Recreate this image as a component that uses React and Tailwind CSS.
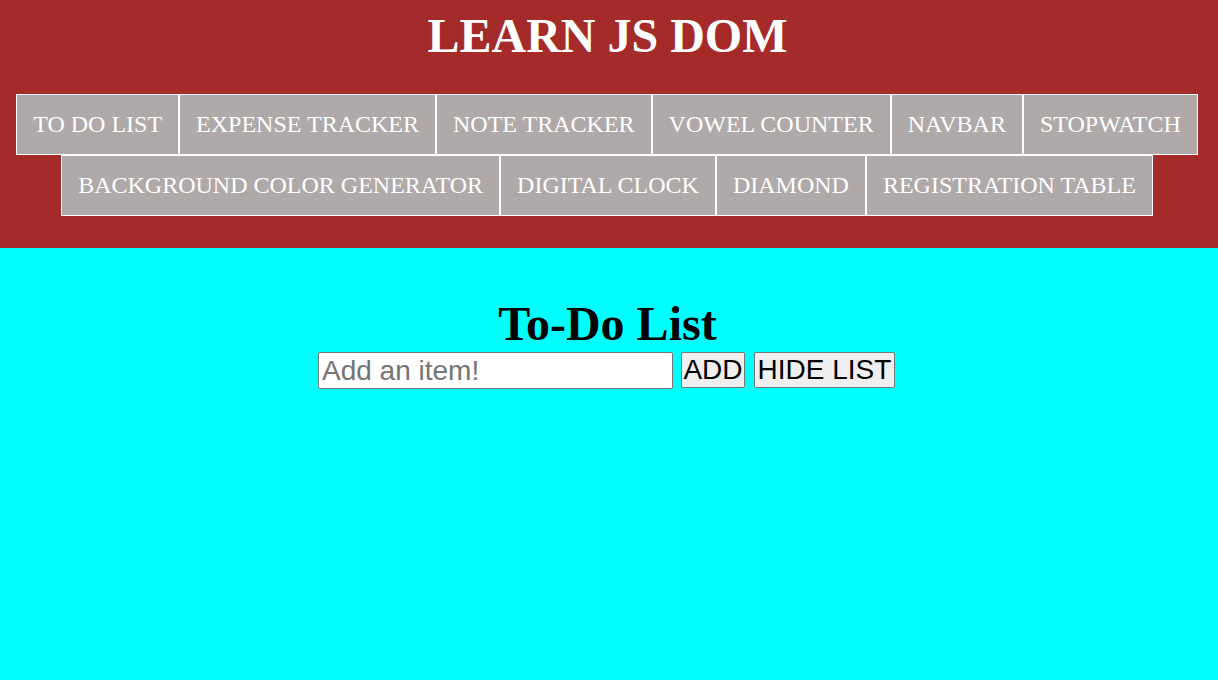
export default function App() {
  const row = [
    "TO DO LIST",
    "EXPENSE TRACKER",
    "NOTE TRACKER",
    "VOWEL COUNTER",
    "NAVBAR",
    "STOPWATCH",
    "BACKGROUND COLOR GENERATOR",
    "DIGITAL CLOCK",
    "DIAMOND",
    "REGISTRATION TABLE",
  ];
  return (
    <div className="min-h-[680px] flex flex-col" style={{ fontFamily: '"Liberation Serif", "Times New Roman", serif' }}>
      <header className="bg-[#a52a2a] pt-[9px] pb-[32px] pr-[3px]">
        <h1 className="text-center text-white font-bold text-[48px] leading-[53px] mb-[32px] m-0">
          LEARN JS DOM
        </h1>
        <nav className="flex flex-wrap justify-center pr-[1px]">
          {row.map((t) => (
            <div
              key={t}
              className="bg-[#afa9a9] border border-white text-white text-[24px] leading-[27px] px-4 py-4 whitespace-nowrap"
            >
              {t}
            </div>
          ))}
        </nav>
      </header>
      <main className="flex-1 bg-[#00ffff] pt-[49px] pr-[3px]">
        <h1 className="text-center text-black font-bold text-[48px] leading-[53px] m-0">
          To-Do List
        </h1>
        <div
          className="flex justify-center items-start mt-[2px] pr-[2px]"
          style={{ fontFamily: '"Liberation Sans", Arial, sans-serif' }}
        >
          <input
            type="text"
            placeholder="Add an item!"
            className="w-[355px] h-[37px] bg-white border border-[#767676] rounded-[2px] px-[3px] text-[28px] leading-[32px] text-black placeholder:text-[#757575] outline-none"
          />
          <button className="ml-[8px] w-[64px] h-[36px] bg-[#efefef] border border-[#767676] rounded-[2px] text-[28px] leading-[32px] text-black text-center p-0">
            ADD
          </button>
          <button className="ml-[9px] w-[141px] h-[36px] bg-[#efefef] border border-[#767676] rounded-[2px] text-[28px] leading-[32px] text-black text-center p-0">
            HIDE LIST
          </button>
        </div>
      </main>
    </div>
  );
}
